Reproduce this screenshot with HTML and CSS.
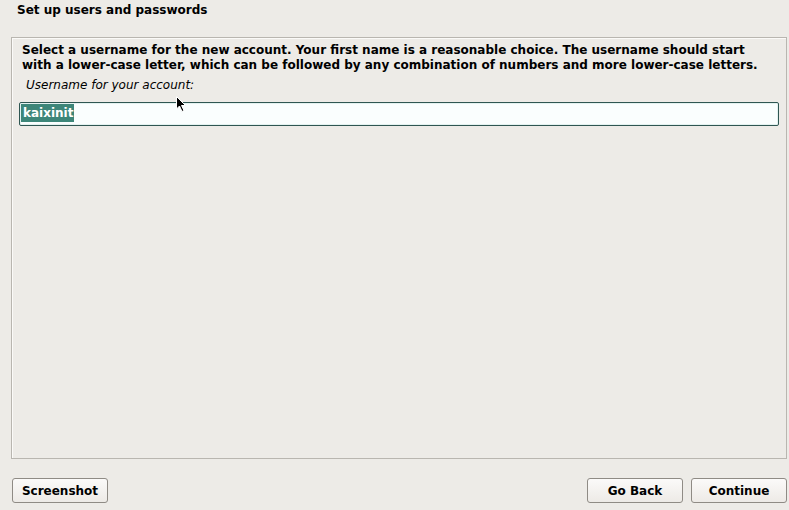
FILE: index.html
```html
<!DOCTYPE html>
<html>
<head>
<meta charset="utf-8">
<link rel="stylesheet" href="styles.css">
</head>
<body>
<div class="win">
  <div class="title">Set up users and passwords</div>
  <div class="panel">
    <p class="desc">Select a username for the new account. Your first name is a reasonable choice. The username should start<br>with a lower-case letter, which can be followed by any combination of numbers and more lower-case letters.</p>
    <div class="label">Username for your account:</div>
    <div class="entry"><span class="sel">kaixinit</span></div>
  </div>
  <div class="buttons">
    <button class="btn btn-shot">Screenshot</button>
    <div class="spacer"></div>
    <button class="btn">Go Back</button>
    <button class="btn">Continue</button>
  </div>
  <svg class="cursor" width="12" height="18" viewBox="0 0 12 18"><path d="M0.5 0.5 L0.5 13 L3.5 10 L6 15.5 L8 14.5 L5.5 9.5 L9.5 9.5 Z" fill="#000" stroke="#fff" stroke-width="1"/></svg>
</div>
</body>
</html>
```
FILE: styles.css
```css
html, body {
  margin: 0;
  padding: 0;
  background: #edebe7;
}
.win {
  position: relative;
  width: 789px;
  height: 510px;
  display: flex;
  flex-direction: column;
  font-family: "DejaVu Sans", sans-serif;
  color: #000;
  box-sizing: border-box;
  padding: 0 2px 0 11px;
}
.title {
  font-weight: bold;
  font-size: 12px;
  line-height: 15px;
  padding: 3px 0 0 6px;
  height: 37px;
  box-sizing: border-box;
}
.panel {
  height: 422px;
  border: 1px solid #b9b6b0;
  box-shadow: inset 1px 1px 0 #fbfaf8;
  box-sizing: border-box;
  padding: 5px 7px 0 7px;
}
.desc {
  margin: 0 0 0 3px;
  white-space: nowrap;
  font-weight: bold;
  font-size: 12px;
  line-height: 15px;
}
.label {
  font-style: italic;
  font-size: 12px;
  line-height: 15px;
  margin: 5px 0 0 7px;
  height: 15px;
}
.entry {
  margin-top: 9px;
  height: 24px;
  box-sizing: border-box;
  border: 1px solid #2f5652;
  border-radius: 2px;
  background: #fafefe;
  box-shadow: inset 0 0 0 1px #e3f2f0;
  padding: 1px 0 0 1px;
  font-weight: bold;
  font-size: 12px;
  line-height: 18px;
}
.sel {
  display: inline-block;
  background: #3d8679;
  color: #fff;
  padding: 0 1px 0 2px;
}
.buttons {
  display: flex;
  align-items: center;
  margin-top: 19px;
  margin-left: 1px;
  gap: 8px;
}
.spacer { flex: 1; }
.btn {
  width: 96px;
  height: 25px;
  font-family: "DejaVu Sans", sans-serif;
  font-weight: bold;
  font-size: 12px;
  color: #000;
  background: linear-gradient(#fbfaf9, #edeae6);
  border: 1px solid #8f8b85;
  border-radius: 3px;
  padding: 0;
  margin: 0;
}
.cursor {
  position: absolute;
  left: 176px;
  top: 96px;
}
```
